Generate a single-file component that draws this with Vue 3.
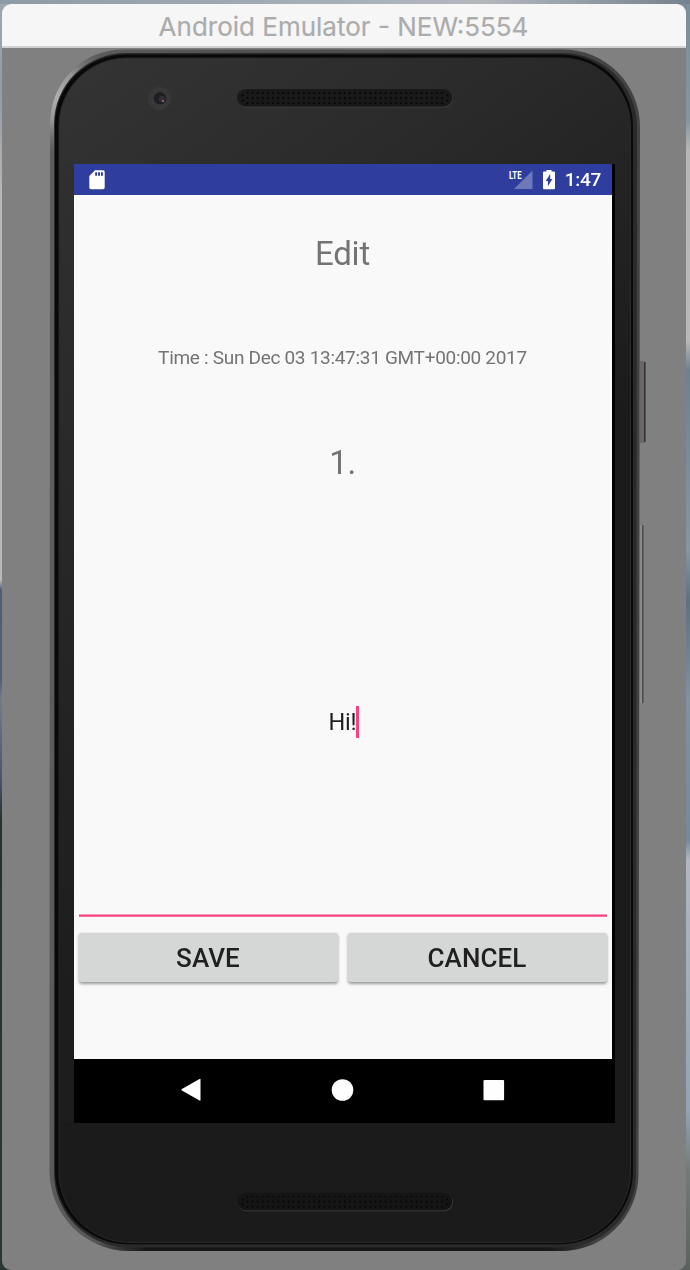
<script setup>
const columns = Array.from({ length: 39 }, (_, i) => 247.5 + i * 5.12)
const speakers = [
  { y: 98, cls: 'grille-top' },
  { y: 1201.7, cls: 'grille-bottom' },
]
const rows = [-5.2, 0, 5.2]
const ends = [242.7, 447.3]
const endRows = [-2.6, 2.6]
</script>

<template>
  <div class="desktop">
    <main class="window">
      <header class="titlebar"><span>Android Emulator - NEW:5554</span></header>
      <div class="stage">
        <svg class="device" viewBox="2 48 684 1222" width="684" height="1222">
          <defs>
            <linearGradient id="rim" x1="50" y1="600" x2="640" y2="640" gradientUnits="userSpaceOnUse">
              <stop offset="0" stop-color="#5e5b5c" />
              <stop offset=".3" stop-color="#505050" />
              <stop offset="1" stop-color="#434041" />
            </linearGradient>
            <radialGradient id="shine" cx="55" cy="95" r="58" gradientUnits="userSpaceOnUse">
              <stop offset="0" stop-color="#b0b0b0" />
              <stop offset=".45" stop-color="#a0a0a0" stop-opacity=".85" />
              <stop offset="1" stop-color="#777" stop-opacity="0" />
            </radialGradient>
            <linearGradient id="face" x1="60" y1="57" x2="420" y2="560" gradientUnits="userSpaceOnUse">
              <stop offset="0" stop-color="#343435" />
              <stop offset=".45" stop-color="#2a2a2b" />
              <stop offset="1" stop-color="#1b1b1b" />
            </linearGradient>
            <linearGradient id="left" x1="0" y1="150" x2="0" y2="1000" gradientUnits="userSpaceOnUse">
              <stop offset="0" stop-color="#303031" />
              <stop offset="1" stop-color="#1d1d1e" />
            </linearGradient>
            <linearGradient id="edge" x1="95" y1="0" x2="600" y2="0" gradientUnits="userSpaceOnUse">
              <stop offset="0" stop-color="#171717" stop-opacity="0" />
              <stop offset=".1" stop-color="#171717" />
              <stop offset=".9" stop-color="#171717" />
              <stop offset="1" stop-color="#171717" stop-opacity="0" />
            </linearGradient>
          </defs>
          <path d="M640 361h4v82h-4z" fill="#6b6768" />
          <path d="M644 362h1.6v80H644z" fill="#343333" />
          <path d="M640 525h2v178h-2z" fill="#8f8b8c" />
          <path d="M642 525h1.5v178H642z" fill="#4c4b4b" />
          <path fill="url(#rim)" d="M50 123A73 73.5 0 0 1 123 49.5H563A77 77 0 0 1 640 126.500L638.500 1174A77 77 0 0 1 561 1251H129A80 80 0 0 1 49.500 1171Z" />
          <path fill="url(#shine)" d="M50 160V123A73 73.500 0 0 1 123 49.500V160Z" />
          <path fill="url(#edge)" d="M95 1243H600L585 1247Q573 1251 561 1251H129Q117 1251 103 1247Z" />
          <path fill="#2b2a2b" d="M54 124A72 71 0 0 1 126 53H563A74 74 0 0 1 637 127L636 1174A74 73.500 0 0 1 561 1247.500H129A75 75 0 0 1 54 1172Z" />
          <path fill="#090909" d="M55 124A71 70 0 0 1 126 54.500H562A72 72 0 0 1 633 127V1171A72 73 0 0 1 561 1244.200H130A73 73 0 0 1 55 1171Z" />
          <path fill="url(#face)" stroke="#292929" d="M59 125A68 67.500 0 0 1 127 58H561A69 69 0 0 1 630.500 127V1171A71 71 0 0 1 560 1242.500H130A71 71 0 0 1 59 1171Z" />
          <path fill="url(#left)" d="M60 164H74V1122H60z" />
          <circle cx="159.500" cy="98.500" r="11.500" fill="#383839" />
          <circle cx="160" cy="98.300" r="6.200" fill="#1f1e23" />
          <circle cx="162" cy="99" r="3.200" fill="#332b35" />
          <circle cx="163" cy="101" r="1.200" fill="#8a5f62" />
          <g v-for="s in speakers" :key="s.y" :class="s.cls">
            <rect x="237.500" :y="s.y - 8.500" width="215.500" height="18" rx="9" class="grille-light" />
            <rect x="237" :y="s.y - 9" width="215.500" height="17.700" rx="8.800" class="grille-body" />
            <template v-for="r in rows" :key="r">
              <circle v-for="x in columns" :key="x" :cx="x" :cy="s.y + r" r="1.350" class="hole" />
            </template>
            <template v-for="x in ends" :key="x">
              <circle v-for="r in endRows" :key="r" :cx="x" :cy="s.y + r" r="1.350" class="hole" />
            </template>
          </g>
        </svg>

        <section class="screen">
          <div class="status">
            <svg class="sd" width="16" height="20" viewBox="0 0 16 20">
              <path fill="#fff" d="M6 .2h8a1.700 1.700 0 0 1 1.700 1.700v15.600a1.700 1.700 0 0 1-1.700 1.700H2A1.700 1.700 0 0 1 .3 17.500V5.900z" />
              <path fill="#303f9f" d="M6.200 2.200h1.900v3.600H6.200zM9.100 2.200H11v3.600H9.100zM12 2.200h1.900v3.600H12z" />
            </svg>
            <div class="indicators">
              <svg width="25" height="20" viewBox="0 0 25 20">
                <path fill="#fff" fill-opacity=".3" d="M24.500 .5v18.500H6z" />
                <text class="lte" x="1" y="8.700" textLength="12.500" lengthAdjust="spacingAndGlyphs">LTE</text>
              </svg>
              <svg class="battery" width="12" height="20" viewBox="0 0 12 20">
                <path fill="#fff" d="M3.500 0h5v1.500H11a1 1 0 0 1 1 1v15.700a1 1 0 0 1-1 1H1a1 1 0 0 1-1-1V2.500a1 1 0 0 1 1-1h2.500z" />
                <path fill="#303f9f" d="M7.200 4v4.900h2.200L4.900 16.200v-5.300H2.700z" />
              </svg>
              <time class="clock">1:47</time>
            </div>
          </div>

          <div class="content">
            <h1 class="heading">Edit</h1>
            <p class="stamp">Time : Sun Dec 03 13:47:31 GMT+00:00 2017</p>
            <p class="number">1.</p>
            <div class="field"><span>Hi!</span><i class="caret"></i></div>
            <div class="actions">
              <button type="button">SAVE</button>
              <button type="button">CANCEL</button>
            </div>
          </div>

          <nav class="navbar">
            <svg width="24" height="24" viewBox="0 0 24 24"><path d="M21.500 1.500v20.500a.7.7 0 0 1-1 .6L2.900 12.500a.9.900 0 0 1 0-1.500L20.500.9a.7.7 0 0 1 1 .6z" /></svg>
            <svg width="24" height="24" viewBox="0 0 24 24"><circle cx="11.500" cy="12" r="10.800" /></svg>
            <svg width="24" height="24" viewBox="0 0 24 24"><rect x="1.500" y="1.900" width="20.600" height="20.300" rx="1" /></svg>
          </nav>
        </section>
      </div>
    </main>
  </div>
</template>

<style>
body { overflow: hidden; }
</style>

<style scoped>
.desktop {
  box-sizing: border-box;
  width: 690px;
  height: 1270px;
  padding: 4px 4px 0 2px;
  background:
    linear-gradient(90deg, #8d9ba6, #b3b8bd 70%, #75818c) 0 0 / 690px 4px no-repeat,
    linear-gradient(#9ba9b3 0, #929ca6 90px, #b7b9b8 200px, #b9bab7 580px, #4b5e73 590px, #4e6075 680px, #737c8b 700px, #46566b 780px, #26312f 820px, #2b3832 1270px) 0 0 / 50% 100% no-repeat,
    linear-gradient(#7c8d9b 0, #8694a0 120px, #b5b6b5 150px, #b9b9b9 340px, #71808f 370px, #8795a3 550px, #60707f 600px, #8290a0 700px, #77889b 840px, #b0b7bf 860px, #94a2b3 1110px, #737b78 1170px, #5b625e 1270px) 100% 0 / 50% 100% no-repeat;
}
.window {
  height: 1266px;
  border-radius: 9px;
  overflow: hidden;
  background: #808080;
}
.titlebar {
  box-sizing: border-box;
  height: 44px;
  border-bottom: 2px solid #d0d2d0;
  background: #f6f6f6;
  text-align: center;
  font: 400 26px/45px Inter, "Liberation Sans", sans-serif;
  -webkit-text-stroke: .2px #acacac;
  color: #acacac;
  white-space: nowrap;
}
.titlebar span { margin-right: 1px; }
.stage { display: grid; }
.device { grid-area: 1 / 1; display: block; }
.grille-light { fill: #454545; }
.grille-body { fill: #19191a; }
.grille-bottom .grille-body { fill: #141415; }
.hole { fill: #050505; stroke: #29292a; stroke-width: .35; }
.screen {
  grid-area: 1 / 1;
  z-index: 1;
  display: flex;
  flex-direction: column;
  width: 541px;
  height: 959px;
  margin: 116px 0 0 72px;
  background: #000;
  font-family: Roboto, sans-serif;
  opacity: .999;
}
.status {
  box-sizing: border-box;
  display: flex;
  align-items: center;
  justify-content: space-between;
  width: 538px;
  height: 31px;
  padding: 0 11px 0 15px;
  background: #303f9f;
}
.indicators { display: flex; align-items: center; }
.lte { font: 700 11px Roboto, sans-serif; fill: #fff; }
.battery { margin: 0 10px 0 10px; }
.clock { font-size: 19px; font-weight: 500; line-height: 32px; letter-spacing: -.3px; color: #fff; }
.content {
  display: flex;
  flex-direction: column;
  align-items: center;
  width: 538px;
  height: 864px;
  background: #fafafa;
  color: #757575;
}
.heading { margin: 39px 1px 0 0; font-size: 33px; font-weight: 400; line-height: 40px; letter-spacing: -.25px; }
.stamp { margin: 72px 1px 0 0; font-size: 19px; line-height: 24px; letter-spacing: -.3px; white-space: nowrap; }
.number { margin: 73px 1px 0 0; font-size: 33px; line-height: 40px; letter-spacing: -.4px; }
.field {
  box-sizing: border-box;
  display: flex;
  align-items: center;
  justify-content: center;
  width: 528px;
  height: 395px;
  margin: 39px 1px 0 0;
  padding-top: 5px;
  background: linear-gradient(#fd9dbd 0 1px, #ff4081 1px 2px, #ff6f9f 2px) 0 100% / 100% 3px no-repeat;
  font-size: 23.5px;
  letter-spacing: -.2px;
  color: #212121;
}
.caret { width: 3px; height: 32px; margin-right: -3px; background: #ff4081; }
.actions { display: flex; gap: 10px; margin: 16px 1px 0 0; }
.actions button {
  width: 259px;
  height: 49px;
  padding: 0;
  border: 0;
  border-radius: 3px;
  background: #d6d8d7;
  box-shadow: 0 1.500px 3px rgba(0, 0, 0, .38);
  font: 500 26px/51px Roboto, sans-serif;
  letter-spacing: .1px;
  color: #212121;
}
.navbar {
  display: flex;
  align-items: center;
  justify-content: center;
  gap: 127.500px;
  width: 537px;
  height: 62px;
  padding-bottom: 2px;
  fill: #fff;
}
</style>
